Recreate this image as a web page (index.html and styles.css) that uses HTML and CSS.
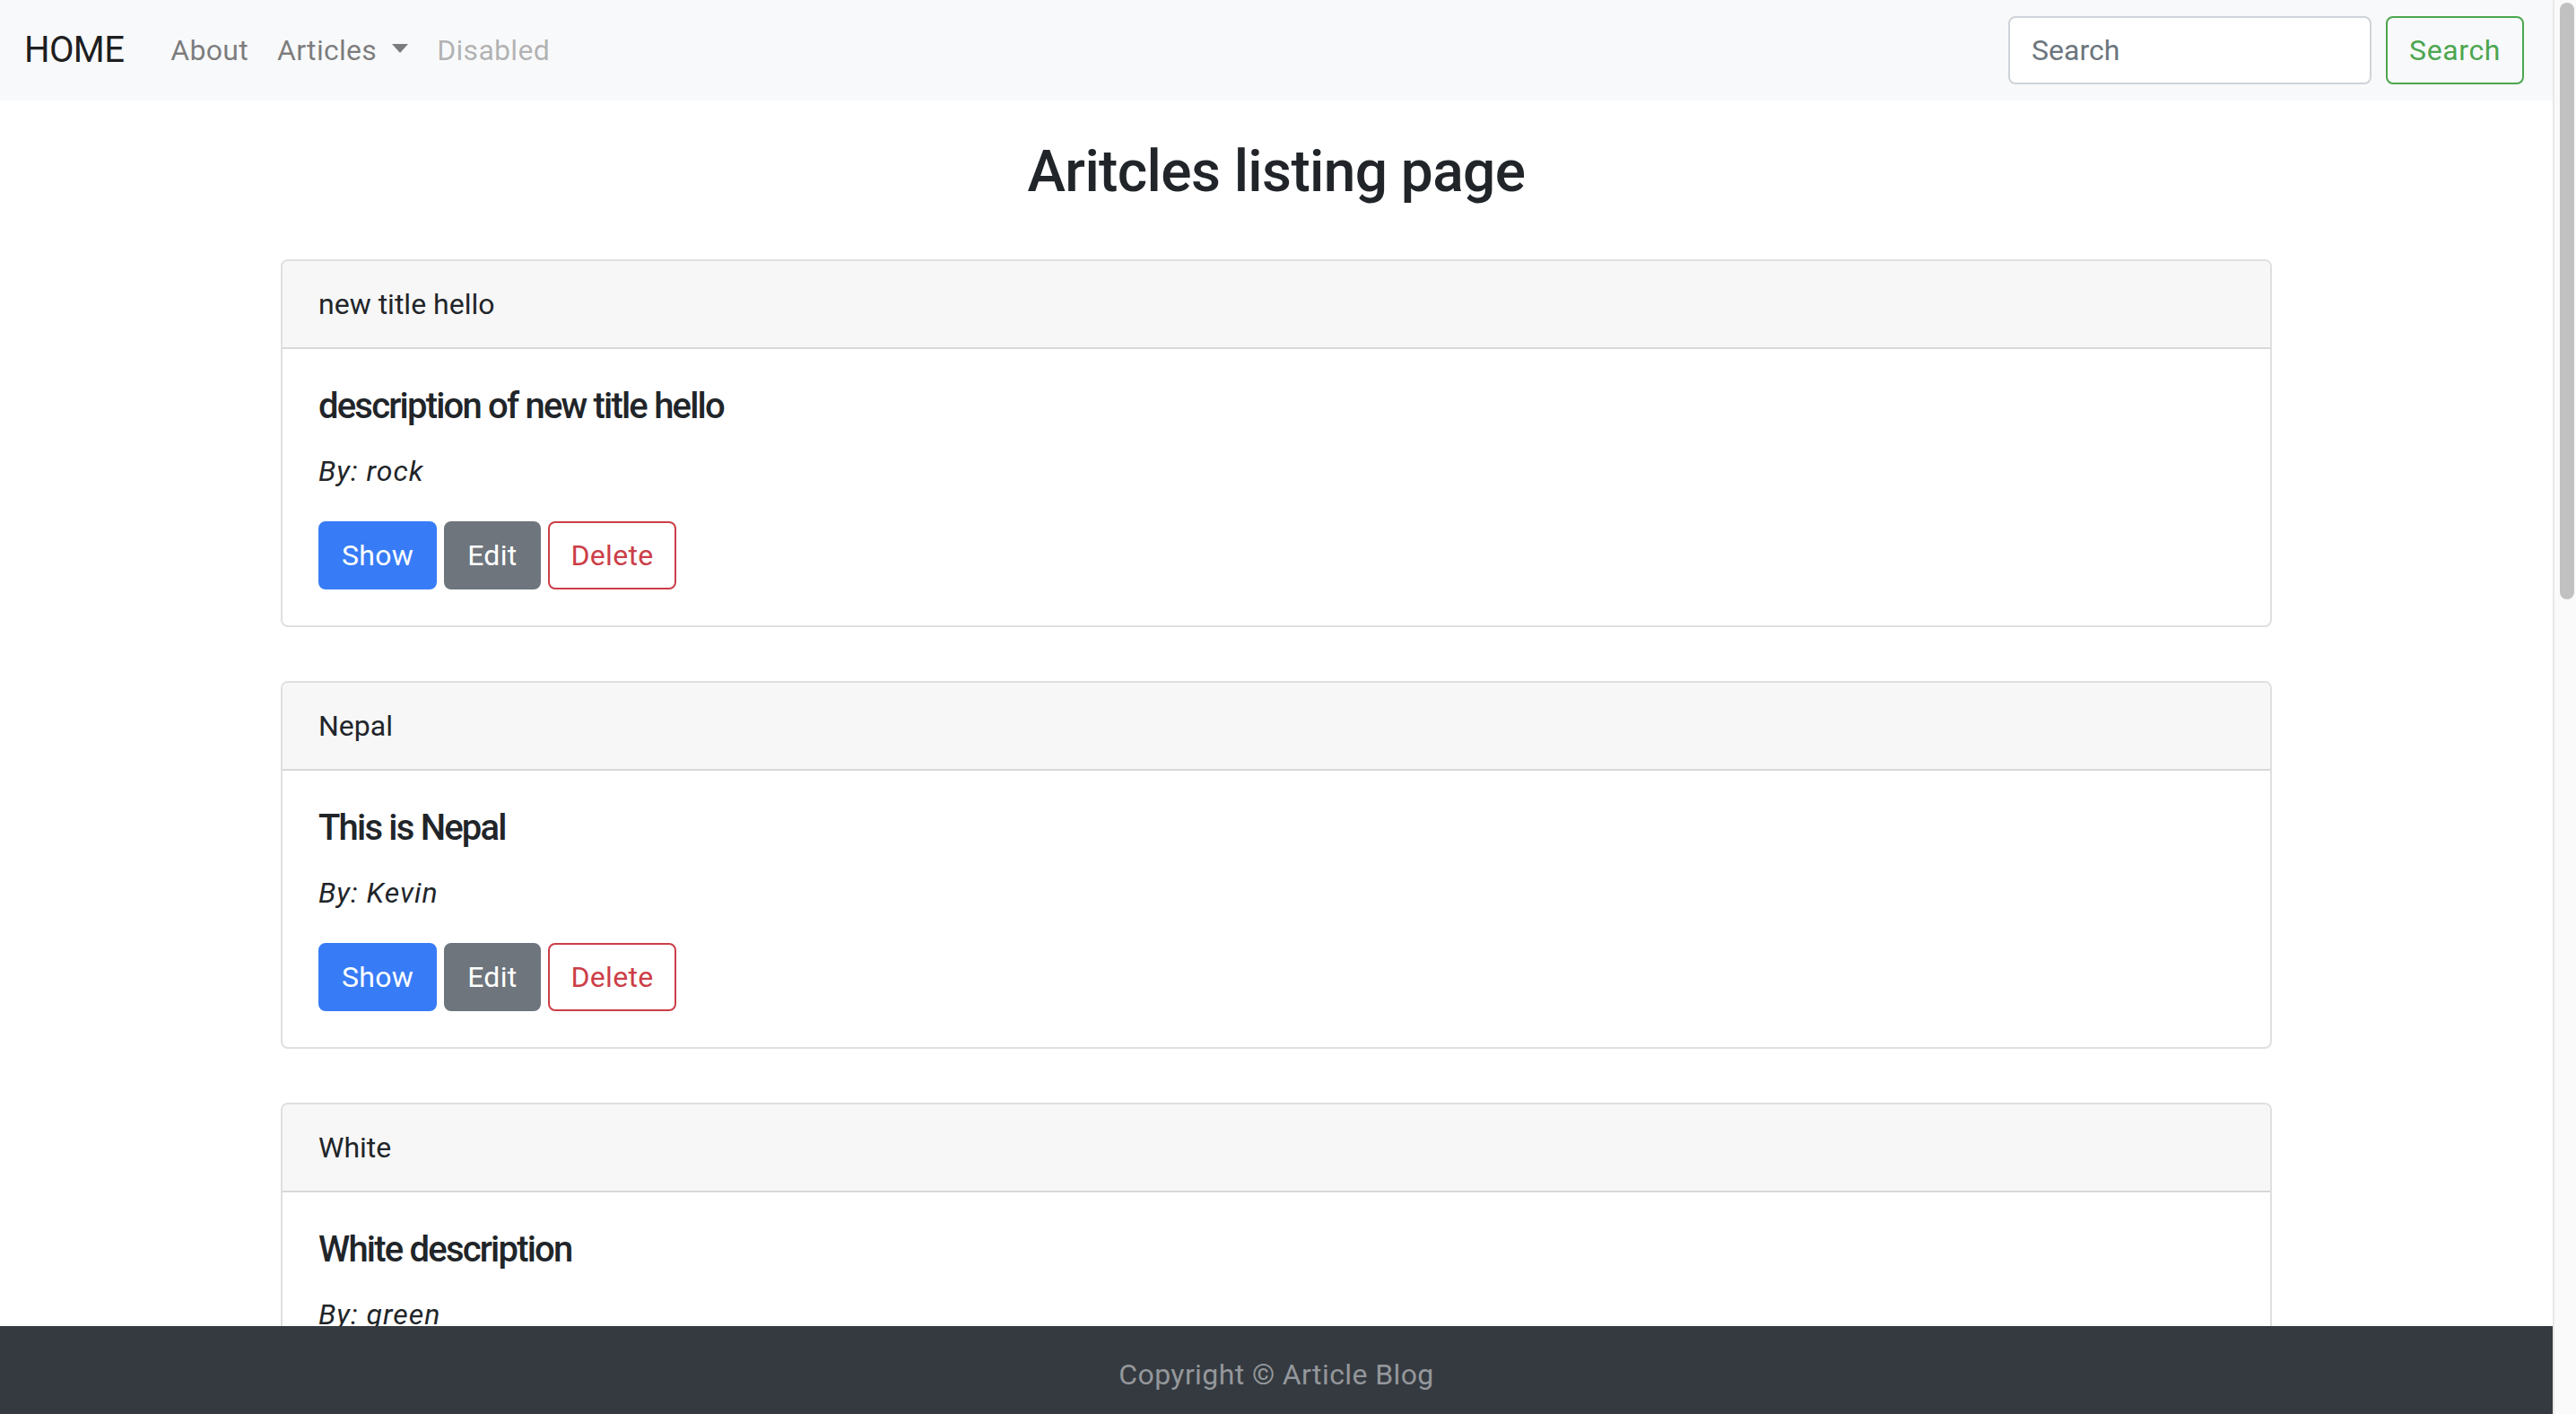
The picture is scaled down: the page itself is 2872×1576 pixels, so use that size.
FILE: index.html
```html
<!DOCTYPE html>
<html lang="en">
<head>
<meta charset="utf-8">
<title>Article Blog</title>
<link rel="stylesheet" href="styles.css">
</head>
<body>
<nav class="navbar">
  <a class="brand" href="#">HOME</a>
  <ul class="nav">
    <li><a class="nav-link" href="#">About</a></li>
    <li><a class="nav-link dropdown-toggle" href="#">Articles</a></li>
    <li><a class="nav-link disabled" href="#">Disabled</a></li>
  </ul>
  <form class="search-form">
    <input class="search-input" type="search" placeholder="Search">
    <button class="btn btn-outline-success" type="button">Search</button>
  </form>
</nav>

<main class="container">
  <h2 class="page-title">Aritcles listing page</h2>

  <div class="card">
    <div class="card-header">new title hello</div>
    <div class="card-body">
      <h5 class="card-title">description of new title hello</h5>
      <p class="card-text"><em>By: rock</em></p>
      <div class="actions">
        <a class="btn btn-primary" href="#">Show</a>
        <a class="btn btn-secondary" href="#">Edit</a>
        <a class="btn btn-outline-danger" href="#">Delete</a>
      </div>
    </div>
  </div>

  <div class="card">
    <div class="card-header">Nepal</div>
    <div class="card-body">
      <h5 class="card-title">This is Nepal</h5>
      <p class="card-text"><em>By: Kevin</em></p>
      <div class="actions">
        <a class="btn btn-primary" href="#">Show</a>
        <a class="btn btn-secondary" href="#">Edit</a>
        <a class="btn btn-outline-danger" href="#">Delete</a>
      </div>
    </div>
  </div>

  <div class="card">
    <div class="card-header">White</div>
    <div class="card-body">
      <h5 class="card-title">White description</h5>
      <p class="card-text"><em>By: green</em></p>
      <div class="actions">
        <a class="btn btn-primary" href="#">Show</a>
        <a class="btn btn-secondary" href="#">Edit</a>
        <a class="btn btn-outline-danger" href="#">Delete</a>
      </div>
    </div>
  </div>
</main>

<footer class="footer">Copyright &copy; Article Blog</footer>

<div class="scrollbar" aria-hidden="true"><div class="scrollbar-thumb"></div></div>
</body>
</html>
```
FILE: styles.css
```css
html { background: #fff; }
body {
  margin: 0 26px 0 0;
  font-family: Roboto, "Liberation Sans", Arial, sans-serif;
  font-size: 32px;
  line-height: 1.5;
  color: #212529;
  background: #fff;
}
a { text-decoration: none; }

/* page scrollbar (drawn over the right edge) */
.scrollbar {
  position: fixed;
  top: 0;
  right: 0;
  width: 26px;
  height: 100vh;
  box-sizing: border-box;
  background: #fafafa;
  border-left: 2px solid #e8e8e8;
  z-index: 10;
}
.scrollbar-thumb {
  margin: 3px 2px 0 6px;
  height: 665px;
  background: #c1c1c1;
  border-radius: 8px;
}

/* navbar */
.navbar {
  display: flex;
  align-items: center;
  padding: 16px 32px 16px 27px;
  background: #f8f9fa;
}
.brand {
  padding: 10px 0;
  margin-right: 36px;
  font-size: 40px;
  line-height: 60px;
  letter-spacing: -0.6px;
  color: rgba(0, 0, 0, 0.9);
}
.nav {
  display: flex;
  list-style: none;
  margin: 0;
  padding: 0;
}
.nav-link {
  display: block;
  padding: 16px;
  line-height: 48px;
  letter-spacing: 0.3px;
  color: rgba(0, 0, 0, 0.5);
}
.nav-link.disabled { color: rgba(0, 0, 0, 0.3); }
.dropdown-toggle::after {
  display: inline-block;
  margin-left: 17px;
  vertical-align: 0.255em;
  content: "";
  border-top: 10px solid;
  border-right: 9px solid transparent;
  border-left: 9px solid transparent;
  border-bottom: 0;
}
.search-form {
  display: flex;
  align-items: center;
  margin-left: auto;
}
.search-input {
  box-sizing: border-box;
  width: 405px;
  height: 76px;
  margin: 0 16px 0 0;
  padding: 12px 24px;
  font: inherit;
  font-size: 32px;
  color: #495057;
  background: #fff;
  border: 2px solid #ced4da;
  border-radius: 8px;
  outline: none;
}
.search-input::placeholder { color: #6c757d; opacity: 1; }

/* buttons */
.btn {
  display: inline-block;
  box-sizing: border-box;
  padding: 12px 24px;
  font-family: inherit;
  font-size: 32px;
  line-height: 48px;
  letter-spacing: 0.3px;
  border: 2px solid transparent;
  border-radius: 8px;
  background: transparent;
  cursor: pointer;
  text-align: center;
}
.btn-primary { color: #fff; background: #377cf6; border-color: #377cf6; }
.btn-secondary { color: #fff; background: #6e757d; border-color: #6e757d; }
.btn-outline-danger { color: #cc3e48; border-color: #cc3e48; background: #fff; }
.btn-outline-success { color: #4ca650; border-color: #4ca650; letter-spacing: 0.6px; }

/* main */
.container {
  width: 2220px;
  margin: 0 auto;
  padding-bottom: 156px;
}
.page-title {
  margin: 42px 0 58px;
  font-size: 64px;
  font-weight: 500;
  line-height: 1.2;
  letter-spacing: -0.6px;
  text-align: center;
}
.card {
  margin-bottom: 60px;
  border: 2px solid rgba(0, 0, 0, 0.125);
  border-radius: 8px;
  overflow: hidden;
}
.card-header {
  padding: 24px 40px;
  background: #f7f7f7;
  border-bottom: 2px solid rgba(0, 0, 0, 0.125);
  line-height: 48px;
}
.card-body { padding: 40px; }
.card-title {
  margin: 0 0 24px;
  font-size: 40px;
  font-weight: 500;
  line-height: 1.2;
  letter-spacing: -1.8px;
}
.card-text {
  margin: 0 0 32px;
  letter-spacing: 1px;
}
.actions {
  display: flex;
  gap: 8px;
}

/* footer */
.footer {
  position: fixed;
  left: 0;
  right: 26px;
  bottom: 0;
  height: 98px;
  box-sizing: border-box;
  padding-top: 30px;
  line-height: 48px;
  text-align: center;
  letter-spacing: 0.4px;
  color: #94979b;
  background: #343a40;
}
```
